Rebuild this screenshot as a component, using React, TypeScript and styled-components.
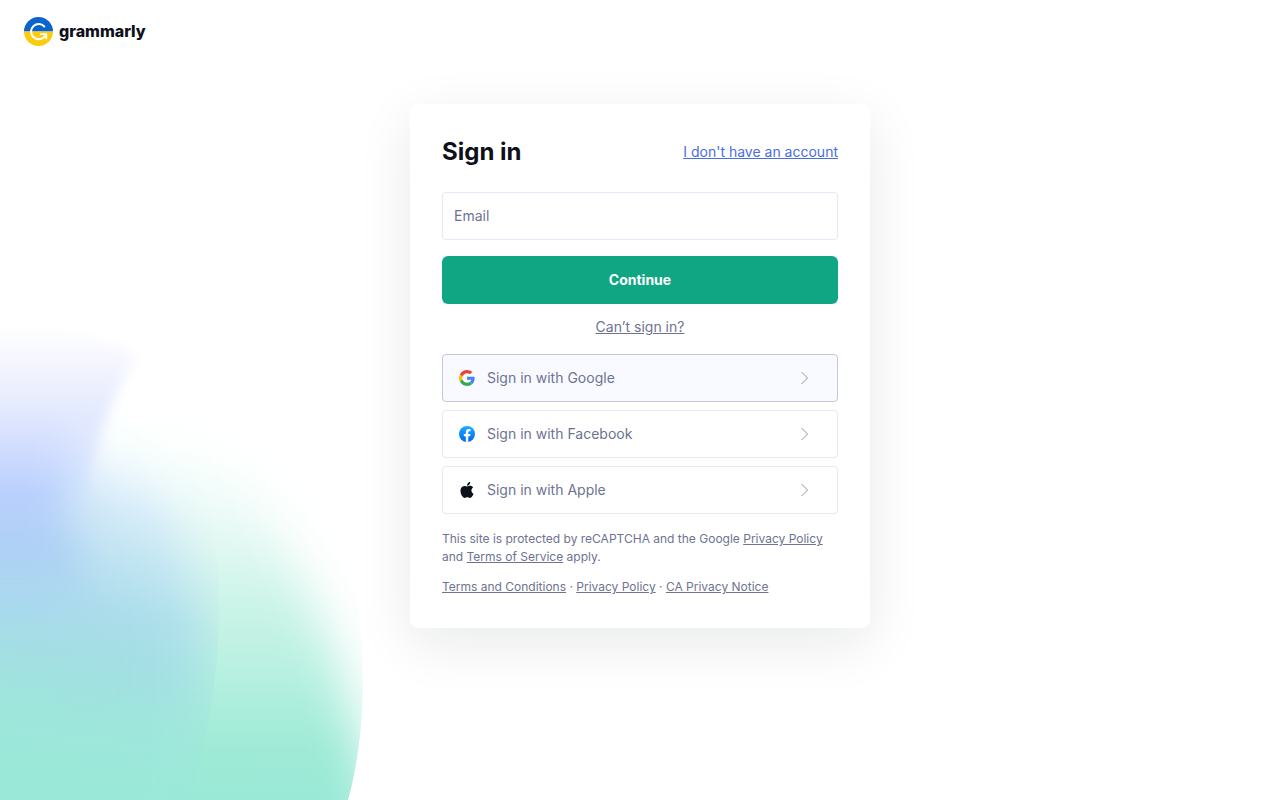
import React from "react";
import styled, { createGlobalStyle } from "styled-components";

const GlobalStyle = createGlobalStyle`
  *, *::before, *::after { box-sizing: border-box; }
  body {
    margin: 0;
    background: #fff;
    color: #6d7391;
    font-family: Inter, "Liberation Sans", sans-serif;
    font-size: 14px;
    line-height: 22px;
  }
`;

const Page = styled.div`
  position: relative;
  display: flex;
  flex-direction: column;
  min-height: 100vh;
  overflow: hidden;
`;

const Art = styled.svg`
  position: absolute;
  left: 0;
  bottom: 0;
  z-index: -1;
  width: 400px;
  height: 500px;
`;

const Header = styled.header`
  display: flex;
  align-items: center;
  height: 64px;
  padding: 0 24px;
`;

const Brand = styled.a`
  display: flex;
  align-items: center;
  gap: 6px;
  color: #0e101a;
  text-decoration: none;
`;

const Wordmark = styled.span`
  padding-bottom: 2px;
  font-size: 16px;
  font-weight: 800;
  line-height: 24px;
`;

const Main = styled.main`
  display: flex;
  justify-content: center;
  padding: 40px 16px;
`;

const Card = styled.section`
  width: 100%;
  max-width: 460px;
  padding: 32px;
  border-radius: 8px;
  background: #fff;
  box-shadow: 0 16px 56px rgba(14, 20, 26, 0.09);
`;

const CardHeader = styled.div`
  display: flex;
  align-items: center;
  justify-content: space-between;
  margin-bottom: 24px;
`;

const Title = styled.h1`
  margin: 0;
  color: #0e101a;
  font-size: 24px;
  font-weight: 700;
  line-height: 32px;
`;

const TextLink = styled.a<{ $accent?: boolean }>`
  color: ${(p) => (p.$accent ? "#4a6ee0" : "inherit")};
  text-decoration: underline;
`;

const Form = styled.form`
  display: flex;
  flex-direction: column;
  gap: 16px;
`;

const EmailInput = styled.input`
  width: 100%;
  height: 48px;
  padding: 0 11px 2px;
  border: 1px solid #e7e8f5;
  border-radius: 4px;
  background: #fff;
  color: #0e101a;
  font: inherit;
  &::placeholder { color: #6d7391; opacity: 1; }
`;

const SubmitButton = styled.button`
  height: 48px;
  border: 0;
  border-radius: 6px;
  background: #11a683;
  color: #fff;
  font: inherit;
  font-weight: 700;
  cursor: pointer;
`;

const Help = styled.p`
  margin: 12px 0 16px;
  text-align: center;
`;

const Providers = styled.div`
  display: flex;
  flex-direction: column;
  gap: 8px;
`;

const ProviderButton = styled.button<{ $active?: boolean }>`
  display: flex;
  align-items: center;
  gap: 12px;
  height: 48px;
  padding: 0 28px 0 16px;
  border: 1px solid ${(p) => (p.$active ? "#c3c6de" : "#e7e9f0")};
  border-radius: 4px;
  background: ${(p) => (p.$active ? "#f9faff" : "#fff")};
  color: #6d7391;
  font: inherit;
  text-align: left;
  cursor: pointer;
`;

const ProviderLabel = styled.span`
  flex: 1;
`;

const Legal = styled.footer`
  display: flex;
  flex-direction: column;
  gap: 12px;
  margin-top: 16px;
  font-size: 12px;
  line-height: 18px;
`;

const LegalText = styled.p`
  margin: 0;
`;

function BackgroundArt() {
  return (
    <Art viewBox="0 300 400 500" aria-hidden="true">
      <defs>
        <linearGradient id="green" gradientUnits="userSpaceOnUse" x1="0" y1="400" x2="0" y2="800">
          <stop offset="0" stopColor="#fff" />
          <stop offset="0.12" stopColor="#fafffd" />
          <stop offset="0.25" stopColor="#effcf9" />
          <stop offset="0.37" stopColor="#e0f8f1" />
          <stop offset="0.5" stopColor="#cdf4e9" />
          <stop offset="0.65" stopColor="#bbf1e2" />
          <stop offset="0.78" stopColor="#aaeddb" />
          <stop offset="0.88" stopColor="#9eead6" />
          <stop offset="1" stopColor="#9ae9d7" />
        </linearGradient>
        <linearGradient id="cyan" gradientUnits="userSpaceOnUse" x1="60" y1="400" x2="0" y2="800">
          <stop offset="0" stopColor="#fff" />
          <stop offset="0.12" stopColor="#edf6fe" />
          <stop offset="0.25" stopColor="#d3eaf8" />
          <stop offset="0.37" stopColor="#c0e4f2" />
          <stop offset="0.5" stopColor="#addeeb" />
          <stop offset="0.62" stopColor="#a4dfe4" />
          <stop offset="0.75" stopColor="#9fe5dd" />
          <stop offset="0.88" stopColor="#9be8d9" />
          <stop offset="1" stopColor="#9ae9d7" />
        </linearGradient>
        <linearGradient id="blue" gradientUnits="userSpaceOnUse" x1="0" y1="325" x2="0" y2="700">
          <stop offset="0" stopColor="#fff" />
          <stop offset="0.08" stopColor="#f7f8ff" />
          <stop offset="0.2" stopColor="#e8edfe" />
          <stop offset="0.33" stopColor="#d0dcfe" />
          <stop offset="0.45" stopColor="#b9d0fd" />
          <stop offset="0.6" stopColor="#aed0f5" />
          <stop offset="0.75" stopColor="#a9d7ee" />
          <stop offset="0.88" stopColor="#a3dee3" />
          <stop offset="1" stopColor="#9ee6dc" />
        </linearGradient>
        <linearGradient id="crispFade" gradientUnits="userSpaceOnUse" x1="0" y1="400" x2="0" y2="510">
          <stop offset="0" stopColor="#fff" />
          <stop offset="1" stopColor="#fff" stopOpacity="0" />
        </linearGradient>
        <linearGradient id="softFade" gradientUnits="userSpaceOnUse" x1="0" y1="570" x2="0" y2="700">
          <stop offset="0" stopColor="#fff" />
          <stop offset="1" stopColor="#fff" stopOpacity="0" />
        </linearGradient>
        <filter id="blur24" x="-50%" y="-50%" width="200%" height="200%">
          <feGaussianBlur stdDeviation="24" />
        </filter>
        <filter id="blur20" x="-50%" y="-50%" width="200%" height="200%">
          <feGaussianBlur stdDeviation="20" />
        </filter>
        <filter id="blur6" x="-50%" y="-50%" width="200%" height="200%">
          <feGaussianBlur stdDeviation="6" />
        </filter>
        <clipPath id="greenEdge">
          <path d="M0 300H250C320 400 363 560 363 680C363 725 357 768 348 800H0Z" />
        </clipPath>
        <clipPath id="cyanEdge">
          <path d="M0 300H140C195 420 219 520 219 610C219 680 206 740 190 800H0Z" />
        </clipPath>
        <mask id="greenMask" maskUnits="userSpaceOnUse" x="0" y="300" width="400" height="500">
          <path
            d="M-80 380C80 380 190 400 250 485C303 560 335 640 356 720L400 900H-80Z"
            fill="#fff"
            filter="url(#blur24)"
          />
        </mask>
        <mask id="cyanMask" maskUnits="userSpaceOnUse" x="0" y="300" width="400" height="500">
          <path
            d="M-80 380C30 390 130 440 165 500C190 555 202 610 204 670L190 850H-80Z"
            fill="#fff"
            filter="url(#blur24)"
          />
        </mask>
        <mask id="blueMask" maskUnits="userSpaceOnUse" x="0" y="300" width="400" height="500">
          <path
            d="M-80 320H0Q80 325 136 354C118 390 98 425 86 490H-80Z"
            fill="url(#crispFade)"
            filter="url(#blur6)"
          />
          <path
            d="M-80 320H20Q50 330 76 400C75 440 66 480 70 520Q90 600 120 720H-80Z"
            fill="url(#softFade)"
            filter="url(#blur20)"
          />
        </mask>
      </defs>
      <g clipPath="url(#greenEdge)">
        <rect y="300" width="400" height="500" fill="url(#green)" mask="url(#greenMask)" />
      </g>
      <g clipPath="url(#cyanEdge)">
        <rect y="300" width="400" height="500" fill="url(#cyan)" mask="url(#cyanMask)" />
      </g>
      <rect y="300" width="400" height="500" fill="url(#blue)" mask="url(#blueMask)" />
    </Art>
  );
}

function BrandMark() {
  return (
    <svg width="29" height="30" viewBox="0 0 29 30" aria-hidden="true">
      <path d="M0 14.500a14.500 14.500 0 0 1 29 0z" fill="#0b63ce" />
      <path d="M0 14.500a14.500 14.500 0 0 0 29 0z" fill="#fccb0b" />
      <path
        d="M20.300 9.500A7.600 7.600 0 1 0 19.800 20.300L21.200 18.500"
        fill="none"
        stroke="#fff"
        strokeWidth="2"
        strokeLinecap="round"
      />
      <path d="M16 17.200h6.300v5" fill="none" stroke="#fff" strokeWidth="1.800" />
    </svg>
  );
}

function GoogleIcon() {
  return (
    <svg width="16" height="16" viewBox="0 0 48 48" aria-hidden="true">
      <path fill="#EA4335" d="M24 9.5c3.54 0 6.71 1.22 9.21 3.6l6.85-6.85C35.9 2.38 30.47 0 24 0 14.62 0 6.51 5.38 2.56 13.22l7.98 6.19C12.43 13.72 17.74 9.5 24 9.5z" />
      <path fill="#4285F4" d="M46.98 24.55c0-1.57-.15-3.09-.38-4.55H24v9.02h12.94c-.58 2.96-2.26 5.48-4.78 7.18l7.73 6c4.51-4.18 7.09-10.36 7.09-17.65z" />
      <path fill="#FBBC05" d="M10.53 28.59c-.48-1.45-.76-2.99-.76-4.59s.27-3.14.76-4.59l-7.98-6.19C.92 16.46 0 20.12 0 24c0 3.88.92 7.54 2.56 10.78l7.97-6.19z" />
      <path fill="#34A853" d="M24 48c6.48 0 11.93-2.13 15.89-5.81l-7.73-6c-2.15 1.45-4.92 2.3-8.16 2.3-6.26 0-11.57-4.22-13.47-9.91l-7.98 6.19C6.51 42.62 14.62 48 24 48z" />
    </svg>
  );
}

function FacebookIcon() {
  return (
    <svg width="16" height="16" viewBox="0 0 24 24" aria-hidden="true">
      <defs>
        <linearGradient id="fb" x1="0" y1="0" x2="0" y2="1">
          <stop offset="0" stopColor="#19aeff" />
          <stop offset="1" stopColor="#0064f0" />
        </linearGradient>
      </defs>
      <circle cx="12" cy="12" r="12" fill="url(#fb)" />
      <path
        fill="#fff"
        d="M16.7 15.5l.5-3.500h-3.300V9.700c0-1 .5-1.900 2-1.900h1.500V4.900s-1.400-.3-2.700-.3c-2.700 0-4.500 1.700-4.500 4.700V12h-3v3.500h3v8.300a12 12 0 0 0 3.700 0v-8.300z"
      />
    </svg>
  );
}

function AppleIcon() {
  return (
    <svg width="16" height="16" viewBox="0 0 24 24" aria-hidden="true">
      <path
        fill="#0e101a"
        d="M12.15 6.9c-.95 0-2.42-1.08-3.96-1.04-2.04.03-3.91 1.18-4.96 3.01-2.12 3.68-.55 9.1 1.52 12.09 1.01 1.45 2.21 3.09 3.79 3.04 1.52-.07 2.09-.99 3.94-.99 1.83 0 2.35.99 3.96.95 1.64-.03 2.68-1.48 3.68-2.95 1.16-1.69 1.64-3.33 1.66-3.42-.04-.01-3.18-1.22-3.22-4.86-.03-3.04 2.48-4.49 2.6-4.56-1.43-2.09-3.62-2.32-4.39-2.38-2-.16-3.68 1.09-4.62 1.09zM15.53 3.83c.84-1.01 1.4-2.43 1.25-3.83-1.21.05-2.66.81-3.53 1.82-.78.9-1.45 2.34-1.27 3.71 1.34.1 2.71-.69 3.55-1.7z"
      />
    </svg>
  );
}

function Chevron() {
  return (
    <svg width="9" height="14" viewBox="0 0 9 14" aria-hidden="true">
      <path d="M1.500 1L7.500 7l-6 6" fill="none" stroke="#8f94aa" strokeWidth="1" />
    </svg>
  );
}

const providers = [
  { name: "Google", Icon: GoogleIcon, active: true },
  { name: "Facebook", Icon: FacebookIcon, active: false },
  { name: "Apple", Icon: AppleIcon, active: false },
];

export default function App() {
  return (
    <Page>
      <GlobalStyle />
      <BackgroundArt />
      <Header>
        <Brand href="#home">
          <BrandMark />
          <Wordmark>grammarly</Wordmark>
        </Brand>
      </Header>
      <Main>
        <Card>
          <CardHeader>
            <Title>Sign in</Title>
            <TextLink href="#signup" $accent>I don't have an account</TextLink>
          </CardHeader>
          <Form onSubmit={(e: React.FormEvent) => e.preventDefault()}>
            <EmailInput type="email" placeholder="Email" aria-label="Email" />
            <SubmitButton type="submit">Continue</SubmitButton>
          </Form>
          <Help>
            <TextLink href="#help">Can’t sign in?</TextLink>
          </Help>
          <Providers>
            {providers.map(({ name, Icon, active }) => (
              <ProviderButton key={name} type="button" $active={active}>
                <Icon />
                <ProviderLabel>Sign in with {name}</ProviderLabel>
                <Chevron />
              </ProviderButton>
            ))}
          </Providers>
          <Legal>
            <LegalText>
              This site is protected by reCAPTCHA and the Google{" "}
              <TextLink href="#google-privacy">Privacy Policy</TextLink> and{" "}
              <TextLink href="#google-terms">Terms of Service</TextLink> apply.
            </LegalText>
            <LegalText>
              <TextLink href="#terms">Terms and Conditions</TextLink> ·{" "}
              <TextLink href="#privacy">Privacy Policy</TextLink> ·{" "}
              <TextLink href="#ca-privacy">CA Privacy Notice</TextLink>
            </LegalText>
          </Legal>
        </Card>
      </Main>
    </Page>
  );
}
